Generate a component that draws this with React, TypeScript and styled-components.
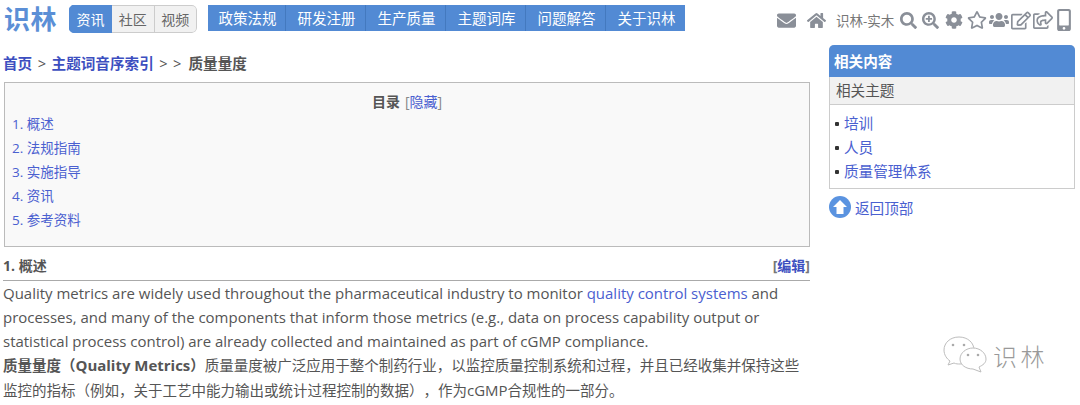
import React from "react";
import styled, { createGlobalStyle } from "styled-components";
import {
  FaEnvelope, FaHome, FaSearch, FaSearchPlus, FaCog, FaRegStar, FaUsers,
  FaRegEdit, FaRegShareSquare, FaMobileAlt,
} from "react-icons/fa";

const Global = createGlobalStyle`
  html, body { margin: 0; padding: 0; background: #fff; overflow: hidden; }
  body { font-family: "Open Sans", "Noto Sans CJK SC", sans-serif; color: #555; text-spacing-trim: space-all; }
  * { box-sizing: border-box; }
  a { text-decoration: none; }
`;

const blue = "#528ad4";
const link = "#4a60d0";

const Page = styled.div`
  width: 1080px;
  height: 405px;
  overflow: hidden;
  position: relative;
`;
const Header = styled.header`
  height: 45px;
  display: flex;
  align-items: flex-start;
  padding: 5px 0 0 4px;
`;
const Logo = styled.div`
  width: 53px;
  font-size: 26px;
  line-height: 28px;
  font-weight: 700;
  letter-spacing: 0.5px;
  color: #5b8fd6;
  white-space: nowrap;
`;
const Tabs = styled.div`
  display: flex;
  margin-left: 12px;
  height: 28px;
  border-radius: 5px;
  overflow: hidden;
`;
const Tab = styled.div<{ $active?: boolean }>`
  width: ${(p) => (p.$active ? 43 : 42.5)}px;
  display: flex;
  align-items: center;
  justify-content: center;
  font-size: 14px;
  color: ${(p) => (p.$active ? "#fff" : "#666")};
  background: ${(p) => (p.$active ? blue : "#f1f1f1")};
  border: 1px solid ${(p) => (p.$active ? blue : "#ccc")};
  border-left-width: ${(p) => (p.$active ? 1 : 0)}px;
  &:last-child { border-radius: 0 5px 5px 0; }
`;
const Nav = styled.nav`
  display: flex;
  margin-left: 11px;
  height: 26px;
  background: ${blue};
`;
const NavItem = styled.a`
  width: 80px;
  padding: 0 0 2px 2px;
  display: flex;
  align-items: center;
  justify-content: center;
  font-size: 14.5px;
  color: #fff;
  border-right: 1px solid #4379bf;
  &:first-child { width: 78px; }
  &:last-child { border-right: 0; width: 79px; }
`;
const Tools = styled.div`
  display: flex;
  align-items: center;
  height: 22px;
  margin: 4px 0 0 91px;
  color: #8a8f98;
`;
const ToolIcon = styled.span<{ $w: number; $ml?: number; $size?: number }>`
  display: flex;
  align-items: center;
  justify-content: center;
  width: ${(p) => p.$w}px;
  margin-left: ${(p) => p.$ml ?? 0}px;
  font-size: ${(p) => p.$size ?? 17}px;
`;
const User = styled.span`
  font-size: 13.5px;
  color: #777;
  margin-left: 10px;
  white-space: nowrap;
  width: 64px;
`;
const Body = styled.div`
  display: flex;
  align-items: flex-start;
`;
const Main = styled.main`
  width: 807px;
  margin-left: 3px;
`;
const Crumbs = styled.div`
  height: 37px;
  padding-top: 8px;
  font-size: 14.6px;
  line-height: 20px;
  font-weight: 700;
  color: #555;
`;
const CrumbLink = styled.a`
  color: #3d4fc0;
`;
const Sep = styled.span<{ $last?: boolean }>`
  font-weight: 400;
  margin: 0 ${(p) => (p.$last ? 7 : 5.5)}px 0 ${(p) => (p.$last ? 0 : 5.5)}px;
`;
const Toc = styled.section`
  margin-left: 1px;
  height: 165px;
  border: 1px solid #bbb;
  background: #f9f9f9;
  padding: 8px 8px 0;
`;
const TocTitle = styled.div`
  text-align: center;
  font-size: 14px;
  line-height: 22px;
  height: 22px;
  b { color: #555; }
  span { color: #888; margin-left: 5px; }
  a { color: ${link}; }
`;
const TocList = styled.ol`
  list-style: none;
  margin: -1px 0 0 -1px;
  padding: 0;
`;
const TocItem = styled.li`
  height: 24px;
  line-height: 24px;
  font-size: 13.5px;
  color: ${link};
`;
const SecHead = styled.div`
  margin-top: 9px;
  height: 25px;
  border-bottom: 1px solid #aaa;
  display: flex;
  justify-content: space-between;
  font-size: 14px;
  line-height: 20px;
  font-weight: 700;
  color: #555;
  span span { color: #777; }
  a { color: #3d4fc0; }
`;
const Para = styled.p`
  margin: 0;
  font-size: 14.98px;
  line-height: 24px;
  color: #555;
  white-space: nowrap;
  a { color: ${link}; }
  b { color: #555; }
`;
const Zh = styled.span`
  font-size: 14.5px;
`;
const Side = styled.aside`
  width: 246px;
  margin: 0 0 0 19px;
`;
const Card = styled.div`
  border: 1px solid #ccc;
  border-top: 0;
  border-radius: 5px 5px 0 0;
`;
const CardHead = styled.div`
  margin: 0 -1px;
  height: 32px;
  background: ${blue};
  border-radius: 5px 5px 0 0;
  color: #fff;
  font-weight: 700;
  font-size: 14.6px;
  line-height: 32px;
  padding-left: 5px;
`;
const CardSub = styled.div`
  height: 28px;
  background: #f1f1f1;
  border-bottom: 1px solid #ccc;
  font-size: 14.6px;
  line-height: 27px;
  padding-left: 6px;
  color: #555;
`;
const RelList = styled.ul`
  list-style: none;
  margin: 0;
  padding: 6px 0 5px 5px;
`;
const RelItem = styled.li`
  height: 24px;
  line-height: 24px;
  font-size: 14.6px;
  color: ${link};
  display: flex;
  align-items: center;
  gap: 5px;
  &::before {
    content: "";
    width: 4px;
    height: 4px;
    margin-top: 2px;
    background: #333;
    border-radius: 1px;
  }
`;
const BackTop = styled.a`
  display: flex;
  align-items: center;
  gap: 4px;
  margin-top: 7px;
  font-size: 14.6px;
  color: ${link};
`;
const Watermark = styled.div`
  position: absolute;
  left: 943px;
  top: 336px;
  display: flex;
  align-items: center;
  gap: 6px;
  color: #999;
  font-size: 24px;
  font-weight: 300;
  letter-spacing: 3.5px;
`;

const navs = ["政策法规", "研发注册", "生产质量", "主题词库", "问题解答", "关于识林"];
const toc = ["1. 概述", "2. 法规指南", "3. 实施指导", "4. 资讯", "5. 参考资料"];

export default function App() {
  return (
    <Page>
      <Global />
      <Header>
        <Logo>识林</Logo>
        <Tabs>
          <Tab $active>资讯</Tab>
          <Tab>社区</Tab>
          <Tab>视频</Tab>
        </Tabs>
        <Nav>
          {navs.map((n) => (
            <NavItem key={n}>{n}</NavItem>
          ))}
        </Nav>
        <Tools>
          <ToolIcon $w={20} $size={19}><FaEnvelope /></ToolIcon>
          <ToolIcon $w={20} $ml={10} $size={19}><FaHome /></ToolIcon>
          <User>识林-实木</User>
          <ToolIcon $w={17}><FaSearch /></ToolIcon>
          <ToolIcon $w={17} $ml={5}><FaSearchPlus /></ToolIcon>
          <ToolIcon $w={18} $ml={6} $size={18}><FaCog /></ToolIcon>
          <ToolIcon $w={20} $ml={4} $size={20}><FaRegStar /></ToolIcon>
          <ToolIcon $w={20} $ml={2} $size={22}><FaUsers /></ToolIcon>
          <ToolIcon $w={20} $ml={2} $size={21}><FaRegEdit /></ToolIcon>
          <ToolIcon $w={20} $ml={2} $size={20}><FaRegShareSquare /></ToolIcon>
          <ToolIcon $w={14} $ml={4} $size={22}><FaMobileAlt /></ToolIcon>
        </Tools>
      </Header>
      <Body>
        <Main>
          <Crumbs>
            <CrumbLink>首页</CrumbLink>
            <Sep>&gt;</Sep>
            <CrumbLink>主题词音序索引</CrumbLink>
            <Sep>&gt;</Sep>
            <Sep $last>&gt;</Sep>
            质量量度
          </Crumbs>
          <Toc>
            <TocTitle>
              <b>目录</b>
              <span>[<a>隐藏</a>]</span>
            </TocTitle>
            <TocList>
              {toc.map((t) => (
                <TocItem key={t}>{t}</TocItem>
              ))}
            </TocList>
          </Toc>
          <SecHead>
            <span>1. 概述</span>
            <span><span>[</span><a>编辑</a><span>]</span></span>
          </SecHead>
          <Para>
            Quality metrics are widely used throughout the pharmaceutical industry to monitor <a>quality control systems</a> and
            <br />
            processes, and many of the components that inform those metrics (e.g., data on process capability output or
            <br />
            statistical process control) are already collected and maintained as part of cGMP compliance.
            <br />
            <b><Zh>质量量度（</Zh>Quality Metrics<Zh>）</Zh></b><Zh>质量量度被广泛应用于整个制药行业，以监控质量控制系统和过程，并且已经收集并保持这些</Zh>
            <br />
            <Zh>监控的指标（例如，关于工艺中能力输出或统计过程控制的数据），作为</Zh>cGMP<Zh>合规性的一部分。</Zh>
          </Para>
        </Main>
        <Side>
          <Card>
            <CardHead>相关内容</CardHead>
            <CardSub>相关主题</CardSub>
            <RelList>
              <RelItem>培训</RelItem>
              <RelItem>人员</RelItem>
              <RelItem>质量管理体系</RelItem>
            </RelList>
          </Card>
          <BackTop>
            <svg width="22" height="22" viewBox="0 0 22 22">
              <circle cx="11" cy="11" r="11" fill="#5a93e0" />
              <path d="M11 4 L18 11 H14.5 V18 H7.5 V11 H4 Z" fill="#fff" />
            </svg>
            返回顶部
          </BackTop>
        </Side>
      </Body>
      <Watermark>
        <svg width="44" height="38" viewBox="0 0 44 38" fill="#fff" stroke="#bdbdbd" strokeWidth="1">
          <path d="M16 1 C7 1 1 7 1 14 C1 19 4 23 7 25 L5 29 L11 27 C13 28 15 28 17 28 C26 28 31 21 31 14 C31 7 25 1 16 1 Z" />
          <path d="M30 12 C23 12 17 17 17 23 C17 29 23 33 30 33 L38 36 L36 31 C40 29 43 27 43 23 C43 17 37 12 30 12 Z" />
          <circle cx="10" cy="9" r="1.3" fill="#aaa" stroke="none" />
          <circle cx="21" cy="9" r="1.3" fill="#aaa" stroke="none" />
          <circle cx="25" cy="19" r="1.3" fill="#aaa" stroke="none" />
          <circle cx="35" cy="19" r="1.3" fill="#aaa" stroke="none" />
        </svg>
        识林
      </Watermark>
    </Page>
  );
}
